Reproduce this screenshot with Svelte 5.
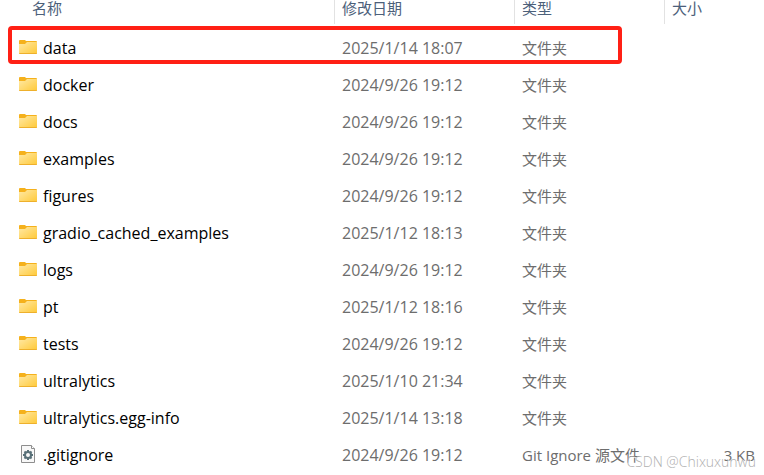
<script>
	const folderType = '文件夹';

	let files = [
		{ name: 'data', date: '2025/1/14 18:07', type: folderType, marked: true },
		{ name: 'docker', date: '2024/9/26 19:12', type: folderType },
		{ name: 'docs', date: '2024/9/26 19:12', type: folderType },
		{ name: 'examples', date: '2024/9/26 19:12', type: folderType },
		{ name: 'figures', date: '2024/9/26 19:12', type: folderType },
		{ name: 'gradio_cached_examples', date: '2025/1/12 18:13', type: folderType },
		{ name: 'logs', date: '2024/9/26 19:12', type: folderType },
		{ name: 'pt', date: '2025/1/12 18:16', type: folderType },
		{ name: 'tests', date: '2024/9/26 19:12', type: folderType },
		{ name: 'ultralytics', date: '2025/1/10 21:34', type: folderType },
		{ name: 'ultralytics.egg-info', date: '2025/1/14 13:18', type: folderType },
		{ name: '.gitignore', date: '2024/9/26 19:12', type: 'Git Ignore 源文件', size: '3 KB' }
	];

	const teeth = [0, 45, 90, 135, 180, 225, 270, 315];
</script>

<div class="explorer">
	<svg class="defs" width="0" height="0" aria-hidden="true">
		<linearGradient id="folder-front" x1="0" y1="0" x2="1" y2="1">
			<stop offset="0" stop-color="#ffe9a6" />
			<stop offset="1" stop-color="#ffc937" />
		</linearGradient>
	</svg>

	<table>
		<colgroup>
			<col class="col-name" />
			<col class="col-date" />
			<col class="col-type" />
			<col />
		</colgroup>
		<thead>
			<tr>
				<th><div>名称</div></th>
				<th><div>修改日期</div></th>
				<th><div>类型</div></th>
				<th><div>大小</div></th>
			</tr>
		</thead>
		<tbody>
			{#each files as { name, date, type, size, marked }}
				<tr class:marked>
					<td>
						<div class="name">
							{#if type === folderType}
								<svg width="18" height="21" viewBox="0 0 18 21" aria-hidden="true">
									<path d="M0 3q0-1 1-1h5l1 1h10q1 0 1 1v3H0z" fill="#f5b11c" />
									<path d="M0 6h6l2-2h10v11q0 1-1 1H1q-1 0-1-1z" fill="url(#folder-front)" />
									<path d="M0 15h18q0 1-1 1H1q-1 0-1-1z" fill="#eeb02c" />
								</svg>
							{:else}
								<svg width="18" height="21" viewBox="0 0 18 21" aria-hidden="true">
									<path d="M2.5.5h10l3 3v14h-13z" fill="#f8f8f8" stroke="#8e8e8e" />
									<path d="M12.5.5v3h3" fill="#fff" stroke="#8e8e8e" />
									<g transform="translate(9 10)" fill="#587078">
										{#each teeth as angle}
											<rect x="-1" y="-5" width="2" height="3" transform={`rotate(${angle})`} />
										{/each}
									</g>
									<circle cx="9" cy="10" r="3" fill="#f8f8f8" stroke="#587078" stroke-width="2" />
								</svg>
							{/if}
							<span>{name}</span>
						</div>
					</td>
					<td class="date">{date}</td>
					<td>{type}</td>
					<td class="size">{size ?? ''}</td>
				</tr>
			{/each}
		</tbody>
	</table>

	<div class="watermark">CSDN @Chixuxunwu</div>
</div>

<style>
	:global(body) {
		margin: 0;
		background: #fff;
	}

	.explorer {
		position: relative;
		overflow: hidden;
		font-family: 'Open Sans', 'Noto Sans CJK SC', sans-serif;
		font-size: 15px;
		color: #6d6d6d;
	}

	.defs {
		position: absolute;
	}

	table {
		width: 100%;
		border-collapse: collapse;
		table-layout: fixed;
	}

	.col-name {
		width: 334px;
	}

	.col-date {
		width: 180px;
	}

	.col-type {
		width: 150px;
	}

	th {
		padding: 0 0 6px;
		font-weight: normal;
		text-align: left;
		color: #4c607a;
	}

	th div {
		height: 24px;
		padding-left: 7px;
		border-left: 1px solid #e2e2e2;
		line-height: 16px;
	}

	th:first-child div {
		padding-left: 32px;
		border-left: none;
	}

	td {
		height: 35px;
		padding: 0 0 2px 8px;
		line-height: 20px;
		white-space: nowrap;
	}

	td:first-child {
		height: 37px;
		padding: 0 0 0 19px;
	}

	.name {
		display: flex;
		align-items: center;
		gap: 6px;
		font-size: 16px;
		color: #000;
	}

	.name svg {
		flex: none;
	}

	.name span {
		padding-bottom: 1px;
	}

	td.date {
		font-size: 16px;
	}

	td.size {
		padding-right: 9px;
		text-align: right;
	}

	tr.marked {
		position: relative;
	}

	/* red frame around the marked row */
	tr.marked td:first-child::after {
		content: '';
		position: absolute;
		top: -4px;
		bottom: 3px;
		left: 8px;
		right: 142px;
		border: 4px solid #ff2015;
		border-radius: 4px;
	}

	.watermark {
		position: absolute;
		right: 8px;
		bottom: 3px;
		font-size: 14px;
		font-weight: 300;
		line-height: 18px;
		color: #b0b0b0;
		text-shadow: 1px 1px 0 #fff;
	}
</style>
